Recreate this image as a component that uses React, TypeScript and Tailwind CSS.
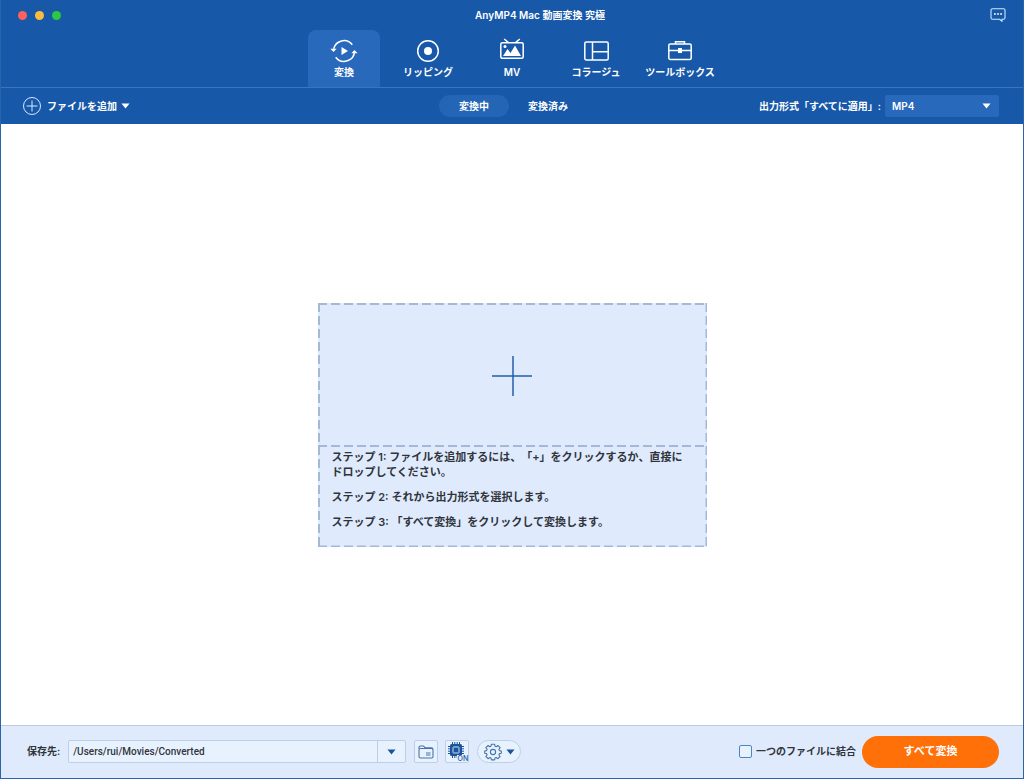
import { ReactNode, useState } from 'react';
import { twJoin } from 'tailwind-merge';

type Tab = {
  id: number;
  label: string;
  icon: ReactNode;
};

const tabs: Tab[] = [
  {
    id: 1,
    label: '変換',
    icon: (
      <svg width="28" height="26" viewBox="0 0 28 26" fill="none" stroke="currentColor" strokeWidth="1.5">
        <path d="M3.5 13A10.500 10.500 0 0 1 22.300 6.700" />
        <path d="M24.500 13A10.500 10.500 0 0 1 5.700 19.300" />
        <path d="M.4 10.800h6.200L3.500 14z" fill="currentColor" stroke="none" />
        <path d="M27.600 15.200h-6.200l3.100-3.200z" fill="currentColor" stroke="none" />
        <path d="M11.500 9v8l6.500-4z" fill="currentColor" stroke="none" />
      </svg>
    ),
  },
  {
    id: 2,
    label: 'リッピング',
    icon: (
      <svg width="28" height="26" viewBox="0 0 28 26" fill="none" stroke="currentColor" strokeWidth="1.5">
        <circle cx="14" cy="13" r="10.3" />
        <circle cx="14" cy="13" r="4" fill="currentColor" stroke="none" />
      </svg>
    ),
  },
  {
    id: 3,
    label: 'MV',
    icon: (
      <svg width="28" height="26" viewBox="0 0 28 26" fill="none" stroke="currentColor" strokeWidth="1.5">
        <rect x="2.8" y="4.8" width="22.4" height="15.5" rx="1.5" />
        <path d="M6.2 1l4.3 3.6M21.8 1l-4.3 3.6" />
        <path d="M5 18l4.500-7 3 4 4.500-7.500L23 18z" fill="currentColor" stroke="none" />
        <circle cx="7" cy="8.500" r="1.500" fill="currentColor" stroke="none" />
      </svg>
    ),
  },
  {
    id: 4,
    label: 'コラージュ',
    icon: (
      <svg width="28" height="26" viewBox="0 0 28 26" fill="none" stroke="currentColor" strokeWidth="1.5">
        <rect x="2.8" y="4" width="23.4" height="18" rx="1.5" />
        <path d="M10.5 4v18M10.5 13.8h15.7" />
      </svg>
    ),
  },
  {
    id: 5,
    label: 'ツールボックス',
    icon: (
      <svg width="28" height="26" viewBox="0 0 28 26" fill="none" stroke="currentColor" strokeWidth="1.5">
        <rect x="2.8" y="6" width="22.4" height="15.5" rx="1.5" />
        <path d="M9.5 6V3.8h9V6M2.8 12.5h22.4" />
        <path d="M12 10h4v5h-4z" fill="currentColor" stroke="none" />
      </svg>
    ),
  },
];

const steps = [
  'ステップ 1: ファイルを追加するには、「+」をクリックするか、直接にドロップしてください。',
  'ステップ 2: それから出力形式を選択します。',
  'ステップ 3: 「すべて変換」をクリックして変換します。',
];

const Caret = ({ className }: { className?: string }) => (
  <svg width="9" height="6" viewBox="0 0 10 6" className={className}>
    <path d="M.5.3h9L5 5.8z" fill="currentColor" />
  </svg>
);

const GearIcon = () => (
  <svg width="18" height="18" viewBox="0 0 18 18" fill="none" stroke="#4774aa" strokeWidth="1.1">
    <path
      strokeLinejoin="round"
      d="M7.400 1.200h3.200l.4 2 1.200.5 1.700-1.200 2.200 2.200-1.200 1.700.5 1.200 1.900.4v2.200l-1.900.4-.5 1.200 1.200 1.700-2.200 2.200-1.700-1.200-1.200.5-.4 1.900H7.400l-.4-1.900-1.200-.5-1.700 1.200-2.200-2.200 1.200-1.700-.5-1.200-1.900-.4V8l1.900-.4.5-1.200-1.200-1.700 2.200-2.200 1.700 1.200L7 3.200z"
    />
    <circle cx="9" cy="9" r="2.6" />
  </svg>
);

const ChipIcon = () => (
  <svg width="16" height="16" viewBox="0 0 16 16" fill="none" stroke="currentColor">
    <path d="M4.500 0v16M6.800 0v16M9.200 0v16M11.500 0v16M0 4.500h16M0 6.800h16M0 9.200h16M0 11.500h16" strokeWidth="1" />
    <rect x="2" y="2" width="12" height="12" rx="1.5" fill="currentColor" stroke="none" />
    <rect x="5" y="5" width="6" height="6" rx=".5" stroke="#c6dcf5" />
  </svg>
);

const Header = () => {
  const [activeTab, setActiveTab] = useState(1);

  return (
    <header className="bg-[#1858a8] text-white">
      <div className="grid h-[30px] grid-cols-[1fr_auto_1fr] items-center px-[17px]">
        <div className="flex gap-2">
          <button aria-label="閉じる" className="size-[9px] rounded-full bg-[#fc615d]" />
          <button aria-label="しまう" className="size-[9px] rounded-full bg-[#fdbc40]" />
          <button aria-label="拡大" className="size-[9px] rounded-full bg-[#2bc840]" />
        </div>
        <h1 className="pl-14 text-[10px] font-semibold">AnyMP4 Mac 動画変換 究極</h1>
        <button aria-label="フィードバック" className="justify-self-end">
          <svg width="16" height="14" viewBox="0 0 16 14" fill="none" stroke="#c9ecff" strokeWidth="1.1">
            <path d="M2.500.8h11a1.500 1.500 0 0 1 1.500 1.500v7.400a1.500 1.500 0 0 1-1.500 1.500H12v2l-2.500-2h-7A1.500 1.500 0 0 1 1 9.700V2.300A1.500 1.500 0 0 1 2.500.8z" />
            <path d="M4 5.200h1.800v1.600H4zM7.100 5.200h1.800v1.600H7.100zM10.200 5.200H12v1.600h-1.800z" fill="#fff" stroke="none" />
          </svg>
        </button>
      </div>
      <nav className="flex justify-center gap-3 border-b border-[#3a76c0]">
        {tabs.map(tab => (
          <button
            key={tab.id}
            onClick={() => setActiveTab(tab.id)}
            className={twJoin(
              'flex h-[57px] w-[72px] flex-col items-center rounded-t-lg pt-2 text-[10px] leading-4 font-semibold whitespace-nowrap',
              activeTab === tab.id && 'bg-[#2869bc]',
            )}
          >
            {tab.icon}
            <span>{tab.label}</span>
          </button>
        ))}
      </nav>
      <div className="grid h-9 grid-cols-[1fr_auto_1fr] items-center pr-6 pl-[22px] text-[10px] font-semibold">
        <button className="flex items-center gap-[6px] justify-self-start">
          <svg width="18" height="18" viewBox="0 0 18 18" fill="none" stroke="#d5e9ff">
            <circle cx="9" cy="9" r="8.500" />
            <path d="M9 3.500v11M3.500 9h11" />
          </svg>
          <span>ファイルを追加</span>
          <Caret className="-ml-[2px]" />
        </button>
        <div className="flex gap-1">
          <button className="h-[22px] w-[70px] rounded-full bg-[#2565b6]">変換中</button>
          <button className="h-[22px] w-[70px] rounded-full">変換済み</button>
        </div>
        <div className="flex items-center gap-1 justify-self-end">
          <label htmlFor="format">出力形式「すべてに適用」:</label>
          <div className="relative">
            <select
              id="format"
              defaultValue="MP4"
              className="h-[22px] w-[114px] appearance-none rounded-xs bg-[#2869bc] px-[7px] font-semibold"
            >
              <option>MP4</option>
              <option>MOV</option>
              <option>MKV</option>
            </select>
            <Caret className="pointer-events-none absolute top-2 right-2" />
          </div>
        </div>
      </div>
    </header>
  );
};

const DropZone = () => (
  <section className="relative w-[389px] bg-[#dfebfd]">
    <svg className="pointer-events-none absolute inset-0 size-full" stroke="#a5b8d8" strokeWidth="2" strokeDasharray="9 4">
      <line x1="0" y1="1" x2="100%" y2="1" />
      <line x1="0" y1="143" x2="100%" y2="143" />
      <line x1="0" y1="100%" x2="100%" y2="100%" strokeWidth="3" />
      <line x1="1" y1="0" x2="1" y2="100%" />
      <line x1="100%" y1="0" x2="100%" y2="100%" strokeWidth="3" />
    </svg>
    <button aria-label="ファイルを追加" className="flex h-[143px] w-full items-center justify-center pt-1 text-[#2560a8]">
      <svg width="40" height="40" viewBox="0 0 40 40" stroke="currentColor" strokeWidth="1.500">
        <path d="M21 0v40M0 20h40" />
      </svg>
    </button>
    <div className="flex flex-col gap-[10px] px-[14px] pt-1 pb-[17px] text-[11px] leading-[15px] font-semibold text-[#30343b]">
      {steps.map(step => (
        <p key={step}>{step}</p>
      ))}
    </div>
  </section>
);

const Footer = () => (
  <footer className="flex h-[53px] items-center border-t border-[#bccbe0] bg-[#dfebfd] pr-6 pb-px pl-[26px] text-[10px] font-semibold text-[#30343b]">
    <label htmlFor="destination">保存先:</label>
    <div className="ml-2 flex h-[23px] w-[338px] rounded-xs border border-[#bccfe8] bg-[#e8f2ff]">
      <input
        id="destination"
        defaultValue="/Users/rui/Movies/Converted"
        className="min-w-0 flex-1 px-1 font-['Roboto','Noto_Sans_CJK_JP',sans-serif] font-medium outline-none"
      />
      <button
        aria-label="保存先を選択"
        className="flex w-7 items-center justify-center border-l border-[#bccfe8] text-[#1b549c]"
      >
        <Caret />
      </button>
    </div>
    <button
      aria-label="フォルダを開く"
      className="ml-2 flex h-[23px] w-6 items-center justify-center rounded-xs border border-[#bccfe8] bg-[#e8f2ff] text-[#4774aa]"
    >
      <svg width="16" height="14" viewBox="0 0 16 14" fill="none" stroke="currentColor" strokeWidth="1.1">
        <path d="M1 4V2.300q0-1.300 1.300-1.300h3.200l1.500 1.700h6.500q1.500 0 1.500 1.500" />
        <rect x="1" y="3.500" width="14" height="9.500" rx="1.500" />
        <path d="M8 8h4.500M8 10h4.500" />
      </svg>
    </button>
    <button
      aria-label="ハードウェアアクセラレーション"
      className="relative ml-[7px] flex h-[23px] w-6 rounded-xs border border-[#bccfe8] bg-[#e8f2ff] pt-px pl-[2px] text-[#1b549c]"
    >
      <ChipIcon />
      <span className="absolute right-0 bottom-0 bg-[#e8f2ff] pl-px text-[7px] leading-[7px] font-medium">ON</span>
    </button>
    <button
      aria-label="設定"
      className="ml-2 flex h-[23px] w-11 items-center justify-center gap-1 rounded-full border border-[#bccfe8] bg-[#e8f2ff] text-[#1b549c]"
    >
      <GearIcon />
      <Caret />
    </button>
    <label className="ml-auto flex items-center gap-1">
      <input type="checkbox" className="size-[13px] appearance-none rounded-xs border border-[#4b86c4] bg-[#e8f2ff] checked:bg-[#1858a8]" />
      一つのファイルに結合
    </label>
    <button className="ml-[6px] h-8 w-[137px] rounded-full bg-[#ff7008] text-[11px] font-bold text-white">
      すべて変換
    </button>
  </footer>
);

const App = () => {
  return (
    <div className="flex min-h-screen flex-col border border-t-0 border-[#2a65ab] bg-white font-['Inter','Noto_Sans_CJK_JP',sans-serif] [text-spacing-trim:space-all]">
      <Header />
      <main className="flex flex-1 items-center justify-center">
        <DropZone />
      </main>
      <Footer />
    </div>
  );
};

export default App;
